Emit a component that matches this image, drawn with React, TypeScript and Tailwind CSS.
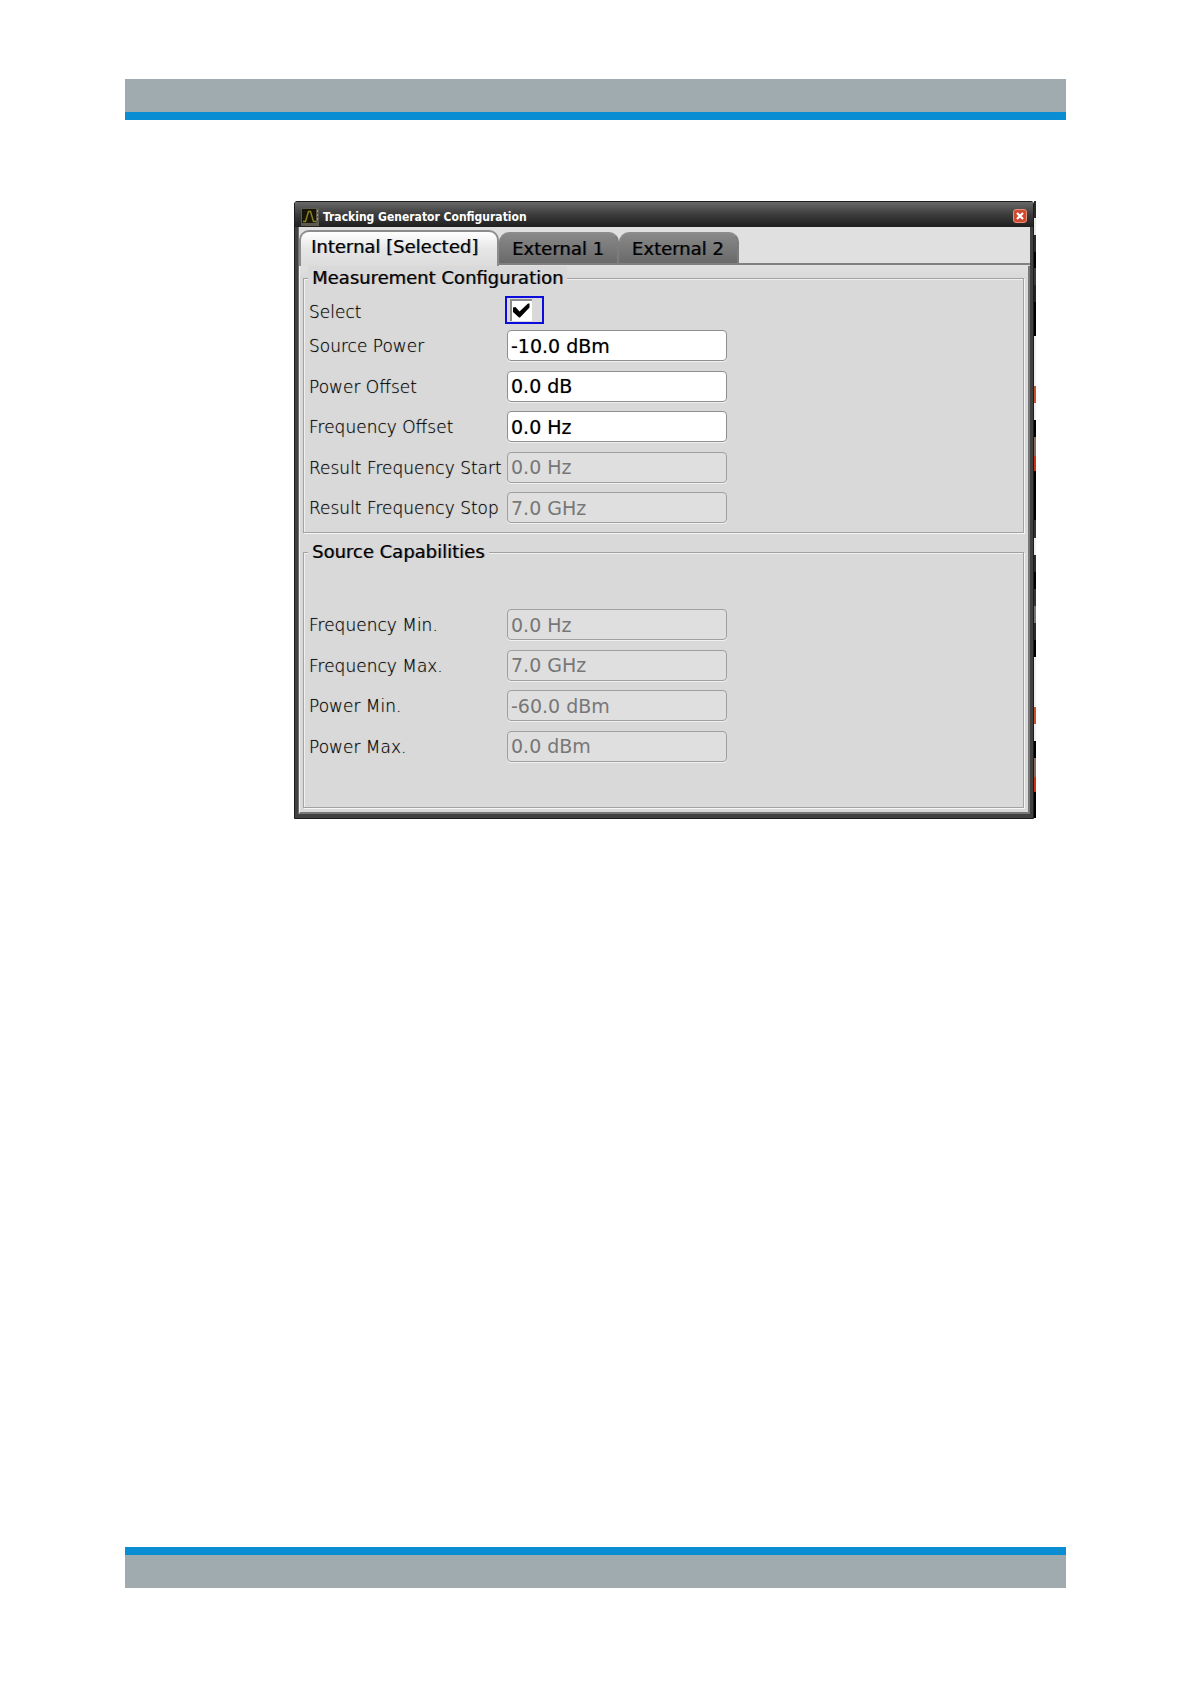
import { useState } from "react";

type Field = { id: string; label: string; value: string; disabled?: boolean };

const measurement: Field[] = [
  { id: "source-power", label: "Source Power", value: "-10.0 dBm" },
  { id: "power-offset", label: "Power Offset", value: "0.0 dB" },
  { id: "frequency-offset", label: "Frequency Offset", value: "0.0 Hz" },
  { id: "result-start", label: "Result Frequency Start", value: "0.0 Hz", disabled: true },
  { id: "result-stop", label: "Result Frequency Stop", value: "7.0 GHz", disabled: true },
];

const capabilities: Field[] = [
  { id: "frequency-min", label: "Frequency Min.", value: "0.0 Hz", disabled: true },
  { id: "frequency-max", label: "Frequency Max.", value: "7.0 GHz", disabled: true },
  { id: "power-min", label: "Power Min.", value: "-60.0 dBm", disabled: true },
  { id: "power-max", label: "Power Max.", value: "0.0 dBm", disabled: true },
];

const labelText =
  "shrink-0 text-[17px] font-extralight leading-6 whitespace-nowrap text-black [text-shadow:0_0_1px_#00000080]";
const heavyText = "text-[18px] leading-6 whitespace-nowrap text-black [text-shadow:1px_0_#00000066]";

function FieldRow({ field }: { field: Field }) {
  return (
    <div className="flex items-center">
      <label htmlFor={field.id} className={`${labelText} w-[198px] pt-px`}>
        {field.label}
      </label>
      <input
        id={field.id}
        type="text"
        defaultValue={field.value}
        disabled={field.disabled}
        className="h-[31px] w-[220px] rounded-[4px] border border-[#8f8f8f] bg-white px-[3px] text-[19px] text-black shadow-[0_1px_0_#f0f0f0] [text-shadow:0_0_1px_#00000066] disabled:border-[#a0a0a0] disabled:bg-[#dfdfdf] disabled:text-[#777777] disabled:[text-shadow:none]"
      />
    </div>
  );
}

const groupBox =
  "min-w-0 border border-[#a2a2a2] pl-[5px] shadow-[1px_1px_0_#f6f6f6,inset_1px_1px_0_#f0f0f0]";
const legendText = `${heavyText} bg-[#d9d9d9] px-1 -ml-px`;

// Part of the window behind that shows along the dialog's right edge.
const edge: [number, string][] = [
  [17, "bg-[#2a2a2a]"], [17, "bg-[#e8e8e8]"], [17, "bg-[#2a2a2a]"], [16, "bg-black"], [17, "bg-[#3a3a3a]"],
  [17, "bg-[#222222]"], [34, "bg-black"], [50, "bg-[#eeeeee]"], [17, "bg-[#c8532f]"], [17, "bg-[#eeeeee]"],
  [17, "bg-black"], [19, "bg-[#8a6a5c]"], [15, "bg-[#cc3311]"], [49, "bg-black"], [18, "bg-[#333333]"],
  [17, "bg-[#eeeeee]"], [17, "bg-[#2a2a2a]"], [17, "bg-black"], [17, "bg-[#333333]"], [17, "bg-[#777777]"],
  [17, "bg-[#2a2a2a]"], [17, "bg-black"], [50, "bg-[#eeeeee]"], [17, "bg-[#c8532f]"], [17, "bg-[#eeeeee]"],
  [17, "bg-black"], [19, "bg-[#8a6a5c]"], [15, "bg-[#cc3311]"], [26, "bg-black"],
];

function Tab({ label, active, onClick }: { label: string; active: boolean; onClick: () => void }) {
  return (
    <button
      type="button"
      role="tab"
      aria-selected={active}
      onClick={onClick}
      className={
        active
          ? `${heavyText} h-9 min-w-[200px] rounded-t-[10px] border-2 border-b-0 border-[#8c8c8c] bg-linear-to-b from-white via-[#e6e6e6] to-[#dcdcdc] px-[10px] pb-1 text-left`
          : `${heavyText} mb-px h-[33px] rounded-t-[10px] border-t-2 border-r-2 border-b-2 border-t-[#8c8c8c] border-r-[#7c7c7c] border-b-[#808080] bg-linear-to-b from-[#888888] to-[#6a6a6a] px-[13px]`
      }
    >
      {label}
    </button>
  );
}

export default function App() {
  const [tab, setTab] = useState(0);
  const [selected, setSelected] = useState(true);
  return (
    <div className="flex min-h-screen flex-col bg-white px-[125px] pt-[79px] pb-24 font-['DejaVu_Sans',sans-serif] text-black">
      <header className="h-[41px] border-b-8 border-[#0a8dd2] bg-[#a0abaf]" />

      <main className="mt-[81px] mr-[30px] mb-10 ml-[169px] flex">
        <section aria-label="Tracking Generator Configuration" className="flex min-w-0 flex-1 flex-col rounded-t-[3px] border border-[#1c1c1c] bg-[#414141]">
          <div className="flex h-[25px] items-center bg-linear-to-b from-[#686868] via-[#3c3c3c] via-50% to-[#1f1f1f] pr-[6px] pl-[6px]">
            <svg viewBox="0 0 18 18" className="mt-1 size-[18px]" aria-hidden="true">
              <rect width="18" height="18" fill="#5c5a4c" />
              <rect x="1" y="1" width="14" height="14" fill="#171508" />
              <path d="M2 13.500h2.500L7.500 3.500h2L12.500 13.500H15" fill="none" stroke="#8d8420" strokeWidth="1.400" />
              <path d="M16.500 2v2M16.500 6v2M16.500 10v2" stroke="#a09c88" />
            </svg>
            <h1 className="mt-[5px] ml-1 flex-1 font-['DejaVu_Sans_Condensed','Noto_Sans',sans-serif] text-[12px] leading-4 font-bold text-white">
              Tracking Generator Configuration
            </h1>
            <button type="button" aria-label="Close" className="mt-[3px] flex size-[14px] items-center justify-center rounded-[3px] border border-[#e8907c] bg-[#cf4a30]">
              <svg viewBox="0 0 10 10" className="size-[10px]" aria-hidden="true">
                <path d="M2 2l6 6M8 2l-6 6" stroke="white" strokeWidth="2.200" />
              </svg>
            </button>
          </div>

          <div className="mr-[3px] mb-1 ml-1 flex flex-col bg-[#e0e0e0] shadow-[-1px_0_0_#6e6e6e]">
            <div role="tablist" className="flex items-end pt-[3px]">
              <Tab label="Internal [Selected]" active={tab === 0} onClick={() => setTab(0)} />
              <Tab label="External 1" active={tab === 1} onClick={() => setTab(1)} />
              <Tab label="External 2" active={tab === 2} onClick={() => setTab(2)} />
              <div className="mb-px h-[2px] flex-1 bg-[#808080]" />
            </div>
            <div className="border-r-2 border-b-2 border-l border-[#777777] border-l-[#f0f0f0] bg-linear-to-b from-[#e0e0e0] from-0% to-[#d9d9d9] to-[12px] pt-0 pr-1 pb-1 pl-[3px]">
              <fieldset className={groupBox}>
                <legend className={legendText}>Measurement Configuration</legend>
                <div className="flex h-10 items-center">
                  <label htmlFor="select" className={`${labelText} w-[196px] pt-[3px]`}>Select</label>
                  <span className="grid h-7 w-[39px] items-center border-2 border-[#0c0cdc] pl-[3px]">
                    <input
                      id="select"
                      type="checkbox"
                      checked={selected}
                      onChange={(e) => setSelected(e.target.checked)}
                      className="peer col-start-1 row-start-1 size-[22px] appearance-none border-t-2 border-l-2 border-[#8c8c8c] bg-white"
                    />
                    <svg viewBox="0 0 22 22" className="pointer-events-none invisible col-start-1 row-start-1 size-[22px] peer-checked:visible" aria-hidden="true">
                      <path d="M3 8.500l2.500-.500 4 4.500L18 4.500h1.500v4L10 18.500H9L3 13z" fill="black" />
                    </svg>
                  </span>
                </div>
                <div className="mb-[9px] flex min-h-[193px] flex-col justify-between">
                  {measurement.map((f) => <FieldRow key={f.id} field={f} />)}
                </div>
              </fieldset>
              <fieldset className={`${groupBox} mt-[7px]`}>
                <legend className={legendText}>Source Capabilities</legend>
                <div className="my-[45px] flex min-h-[153px] flex-col justify-between">
                  {capabilities.map((f) => <FieldRow key={f.id} field={f} />)}
                </div>
              </fieldset>
            </div>
          </div>
        </section>
        <div className="flex w-[2px] flex-col">
          {edge.map(([h, color], i) => (
            <div key={i} className={color} style={{ height: h }} />
          ))}
        </div>
      </main>

      <footer className="mt-auto h-[41px] border-t-8 border-[#0a8dd2] bg-[#a0abaf]" />
    </div>
  );
}
